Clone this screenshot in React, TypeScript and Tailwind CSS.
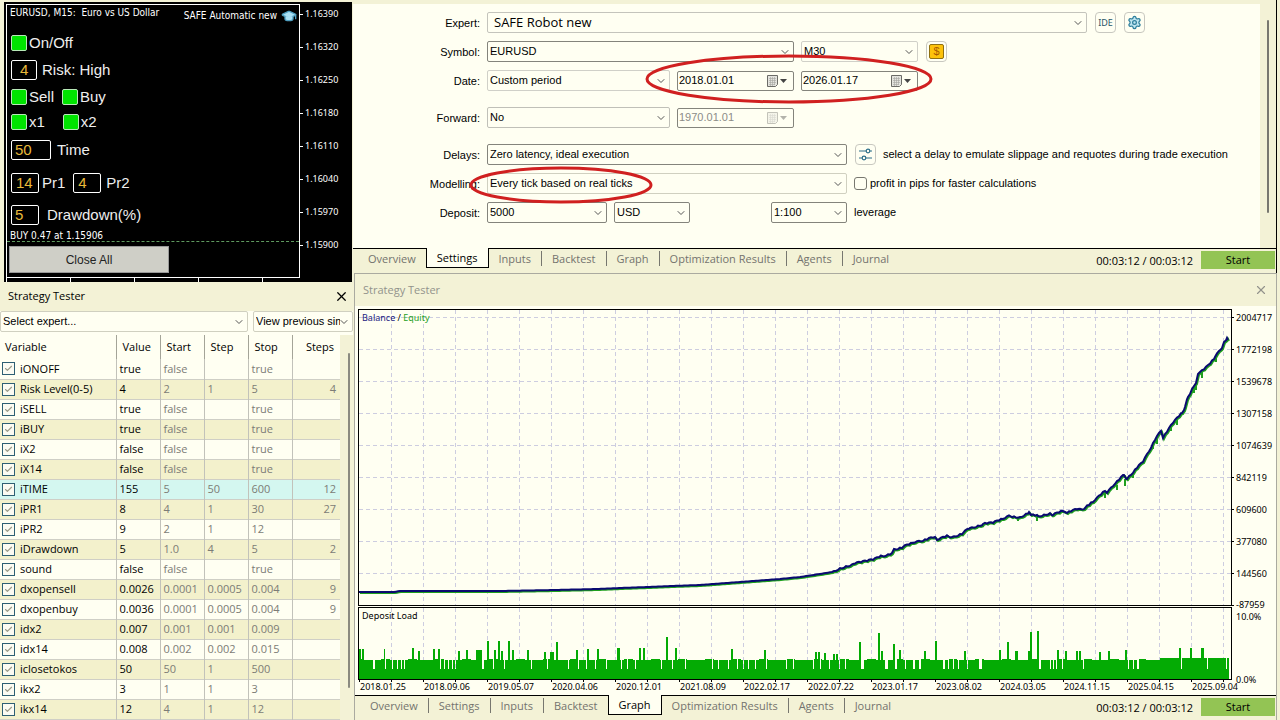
/**
 * Trading terminal layout: chart control panel and input variables on the
 * left, tester settings and the balance graph on the right.
 */
import type { ReactNode } from 'react'
import { Check, ChevronDown, GraduationCap, Settings, X } from 'lucide-react'

const PRICES = ['1.16390', '1.16320', '1.16250', '1.16180', '1.16110', '1.16040', '1.15970', '1.15900']

const TABS = ['Overview', 'Settings', 'Inputs', 'Backtest', 'Graph', 'Optimization Results', 'Agents', 'Journal']

// name, value, start, step, stop, steps
const VARIABLES = [
  ['iONOFF', 'true', 'false', '', 'true', ''],
  ['Risk Level(0-5)', '4', '2', '1', '5', '4'],
  ['iSELL', 'true', 'false', '', 'true', ''],
  ['iBUY', 'true', 'false', '', 'true', ''],
  ['iX2', 'false', 'false', '', 'true', ''],
  ['iX14', 'false', 'false', '', 'true', ''],
  ['iTIME', '155', '5', '50', '600', '12'],
  ['iPR1', '8', '4', '1', '30', '27'],
  ['iPR2', '9', '2', '1', '12', ''],
  ['iDrawdown', '5', '1.0', '4', '5', '2'],
  ['sound', 'false', 'false', '', 'true', ''],
  ['dxopensell', '0.0026', '0.0001', '0.0005', '0.004', '9'],
  ['dxopenbuy', '0.0036', '0.0001', '0.0005', '0.004', '9'],
  ['idx2', '0.007', '0.001', '0.001', '0.009', ''],
  ['idx14', '0.008', '0.002', '0.002', '0.015', ''],
  ['iclosetokos', '50', '50', '1', '500', ''],
  ['ikx2', '3', '1', '1', '3', ''],
  ['ikx14', '12', '4', '1', '12', ''],
]

const BALANCE_LABELS = [
  '2004717', '1772198', '1539678', '1307158', '1074639', '842119', '609600', '377080', '144560', '-87959',
]

const DATES = [
  '2018.01.25', '2018.09.06', '2019.05.07', '2020.04.06', '2020.12.01', '2021.08.09', '2022.02.17',
  '2022.07.22', '2023.01.17', '2023.08.02', '2024.03.05', '2024.11.15', '2025.04.15', '2025.09.04',
]

const BALANCE: [number, number][] = [
  [5, 286], [40, 286], [46, 285], [146, 285], [201, 284], [243, 283], [266, 282], [294, 281], [318, 280],
  [346, 279], [386, 276], [426, 273], [446, 271], [466, 268], [478, 266], [486, 262], [499, 258],
  [519, 254], [528, 250], [538, 247], [540, 243], [549, 241], [559, 237], [569, 235], [581, 231],
  [583, 234], [594, 230], [598, 231], [609, 227], [616, 222], [629, 218], [639, 217], [649, 213],
  [656, 210], [666, 211], [675, 206], [677, 209], [684, 210], [696, 207], [699, 209], [709, 205],
  [713, 207], [724, 203], [731, 202], [739, 196], [751, 185], [753, 187], [761, 178], [770, 169],
  [773, 173], [779, 167], [783, 162], [789, 156], [797, 142], [799, 137], [807, 125], [809, 132],
  [819, 117], [828, 107], [831, 101], [834, 91], [838, 83], [842, 77], [844, 68], [848, 64], [854, 59],
  [861, 51], [868, 42], [870, 36], [873, 32], [874, 34],
]

// x positions where equity dips below balance, with the depth of the dip
const DIPS: [number, number, number][] = [
  [664, 211, 4], [683, 210, 5], [751, 187, 5], [763, 179, 5], [771, 173, 7], [779, 168, 4], [799, 138, 5],
  [803, 133, 5], [817, 120, 5], [823, 114, 5], [840, 82, 5], [842, 78, 6], [848, 66, 6], [862, 51, 5],
]

const PEAKS: Record<number, number> = {
  5: 30, 8: 30, 30: 30, 58: 31, 64: 28, 79: 30, 84: 30, 104: 28, 112: 29, 122: 29, 123: 29, 124: 29,
  125: 29, 126: 29, 127: 29, 133: 38, 140: 29, 144: 38, 147: 28, 154: 38, 158: 29, 173: 29, 190: 27,
  196: 27, 198: 27, 202: 37, 222: 29, 233: 30, 243: 30, 263: 31, 264: 31, 285: 31, 289: 31, 312: 42,
  321: 31, 377: 30, 410: 29, 461: 27, 464: 27, 470: 26, 479: 25, 482: 25, 505: 37, 524: 46, 527: 28,
  539: 35, 545: 29, 570: 28, 581: 38, 610: 28, 645: 29, 653: 37, 661: 28, 662: 28, 674: 28, 676: 47,
  683: 48, 703: 29, 711: 28, 722: 28, 725: 28, 745: 27, 754: 28, 771: 29, 825: 31, 836: 31, 847: 31,
  848: 31,
}

const GAPS = new Set([
  19, 20, 31, 38, 43, 47, 50, 86, 90, 94, 98, 101, 128, 129, 139, 150, 177, 193, 214, 224, 232, 241, 252,
  267, 273, 281, 307, 318, 331, 358, 364, 374, 383, 389, 394, 401, 412, 432, 439, 459, 466, 475, 485,
  491, 507, 508, 509, 531, 532, 533, 541, 542, 551, 559, 560, 565, 566, 589, 590, 594, 599, 604, 613,
  625, 626, 627, 685, 686, 696, 699, 702, 708, 729, 774, 779, 783, 784, 827, 853, 872,
])

function loadPath() {
  let d = 'M5 373'
  for (let x = 5; x < 875; x++) {
    const usual = x > 805 ? 21 : 19 + (Math.floor(x / 9) % 3 === 0 ? 1 : 0)
    const height = GAPS.has(x) ? 10 : (PEAKS[x] ?? PEAKS[x - 1] ?? usual)
    d += `V${373 - height}H${x + 1}`
  }
  return d + 'V373Z'
}

// Fill in a point every 2px, with a small ripple once the curve starts to climb
function withRipple(list: [number, number][]) {
  const ripple = [0, -1, 1, 0, 1, -1]
  const out: [number, number][] = []
  for (let i = 0; i < list.length - 1; i++) {
    const [x0, y0] = list[i]
    const [x1, y1] = list[i + 1]
    out.push([x0, y0])
    for (let x = x0 + 2; x < x1; x += 2) {
      const y = y0 + ((y1 - y0) * (x - x0)) / (x1 - x0)
      out.push([x, y + (x > 480 ? ripple[x % 6] : 0)])
    }
  }
  out.push(list[list.length - 1])
  return out
}

function toPoints(list: [number, number][], dx: number, dy: number) {
  return list.map(([x, y]) => `${x + dx},${y + dy}`).join(' ')
}

interface SelectBoxProps {
  label: string
  value: string
  className: string
  id?: string
}

function SelectBox({ label, value, className, id }: SelectBoxProps) {
  return (
    <div className={`relative h-[21px] rounded-xs border ${className}`}>
      <select id={id} aria-label={label} className="block h-full w-full appearance-none pr-3 pl-[2px] outline-none">
        <option>{value}</option>
      </select>
      <ChevronDown
        size={12}
        strokeWidth={2}
        className="pointer-events-none absolute top-1 right-0.5 text-[#555]"
      />
    </div>
  )
}

interface DateBoxProps {
  label: string
  value: string
  disabled?: boolean
}

function DateBox({ label, value, disabled = false }: DateBoxProps) {
  return (
    <div
      className={`flex h-5 w-[117px] items-center rounded-xs border border-[#84847c] pr-1 ${disabled ? 'text-[#8c8c88]' : ''}`}
    >
      <input
        type="text"
        aria-label={label}
        defaultValue={value}
        disabled={disabled}
        className="w-full min-w-0 flex-1 pl-px outline-none"
      />
      <button type="button" aria-label={`${label} calendar`} disabled={disabled} className={disabled ? 'opacity-40' : ''}>
        <svg width="23" height="14" viewBox="0 0 23 14">
          <path d="M1.5 1.5h10v9l-2 2h-8z" fill="#e4e4de" stroke="#6b6b66" />
          <path d="M3 4.500h7M3 6.500h7M3 8.500h7M3 10.500h6M4.500 3v9M6.500 3v9M8.500 3v8" stroke="#a5a5a0" strokeWidth="0.600" />
          <path d="M14 5h7l-3.500 4z" fill="#444" />
        </svg>
      </button>
    </div>
  )
}

function FormRow({ label, htmlFor, children }: { label: string; htmlFor: string; children: ReactNode }) {
  return (
    <div className="flex h-[21px] items-center gap-[7px]">
      <label htmlFor={htmlFor} className="w-[119px] shrink-0 pt-0.5 text-right">
        {label}
      </label>
      {children}
    </div>
  )
}

function TabBar({ active }: { active: string }) {
  const at = TABS.indexOf(active)
  return (
    <div className="flex h-[25px] shrink-0 items-start bg-[#f3f2d6] text-[11px]">
      <div className="h-5 w-[5px] border-t border-black" />
      <nav className="flex">
        {TABS.map((tab, i) => (
          <div
            key={tab}
            className={
              tab === active
                ? 'h-5 border-x border-b border-black bg-[#fffff2]'
                : 'flex h-5 items-center border-t border-black'
            }
          >
            <button
              type="button"
              className={`h-[15px] px-[10px] leading-[15px] ${tab === active ? 'mt-0.5 text-black' : 'text-[#73736e]'} ${
                tab !== active && i !== at - 1 && i < TABS.length - 1 ? 'border-r border-[#77776f]' : ''
              }`}
            >
              {tab}
            </button>
          </div>
        ))}
      </nav>
      <div className="flex flex-1 items-start justify-end border-t border-black">
        <span className="mt-[3px] pr-2 leading-[18px]">00:03:12 / 00:03:12</span>
        <button type="button" className="mt-0.5 mr-px h-[18px] w-[74px] bg-[#93c454] leading-[18px]">
          Start
        </button>
      </div>
    </div>
  )
}

function Lamp({ label }: { label: string }) {
  return (
    <button type="button" className="flex items-center gap-[2px]">
      <span className="size-4 rounded-xs border border-[#b8e8b8] bg-[#00e400]" />
      {label}
    </button>
  )
}

function NumberBox({ label, value, className }: { label: string; value: string; className: string }) {
  return (
    <label className="flex items-center">
      <input
        type="text"
        defaultValue={value}
        className={`h-5 rounded-xs border border-white bg-black text-[#e8b93a] outline-none ${className}`}
      />
      <span>{label}</span>
    </label>
  )
}

function ChartPanel() {
  return (
    <section aria-label="Chart" className="mt-0.5 mr-px ml-1 flex bg-black pt-0.5 pl-[2px] text-[#eee]">
      <div className="min-w-0 flex-1">
        <div className="border border-white pb-1 font-['Liberation_Sans',sans-serif] text-[15px]">
          <div className="flex h-[25px] justify-between pr-0.5 pl-[3px] font-['DejaVu_Sans_Condensed','DejaVu_Sans',sans-serif] text-[10px] text-white">
            <span className="whitespace-pre leading-[15px]">EURUSD, M15:  Euro vs US Dollar</span>
            <span className="flex items-center gap-1 pb-1">
              SAFE Automatic new
              <GraduationCap size={16} fill="#a9e0f4" strokeWidth={2} className="text-[#4f9fc0]" />
            </span>
          </div>
          <div className="pl-1">
            <div className="flex h-[26px] items-center">
              <Lamp label="On/Off" />
            </div>
            <div className="flex h-7 items-center">
              <NumberBox label="Risk: High" value="4" className="mr-[5px] w-[26px] pl-2" />
            </div>
            <div className="flex h-[26px] items-center gap-2">
              <Lamp label="Sell" />
              <Lamp label="Buy" />
            </div>
            <div className="flex h-6 items-center gap-[18px]">
              <Lamp label="x1" />
              <Lamp label="x2" />
            </div>
            <div className="flex h-8 items-center">
              <NumberBox label="Time" value="50" className="mr-[6px] w-10 pl-[3px]" />
            </div>
            <div className="flex h-[34px] items-center gap-2">
              <NumberBox label="Pr1" value="14" className="mr-[3px] w-7 pl-1" />
              <NumberBox label="Pr2" value="4" className="mr-[5px] w-7 pl-1" />
            </div>
            <div className="flex h-[30px] items-center">
              <NumberBox label="Drawdown(%)" value="5" className="mr-2 w-7 pl-[3px]" />
            </div>
          </div>
          <div className="h-3 border-b border-dashed border-[#5f9a5f] pl-[3px] font-['DejaVu_Sans_Condensed','DejaVu_Sans',sans-serif] text-[10px] leading-3 text-white">
            BUY 0.47 at 1.15906
          </div>
          <button
            type="button"
            className="mt-1 ml-0.5 block h-[27px] w-40 border border-[#999] bg-[#cfcfc7] text-xs text-[#222]"
          >
            Close All
          </button>
        </div>
        <div className="flex h-1">
          {[0, 1, 2, 3, 4].map((n) => (
            <span key={n} className="w-16 shrink-0 border-l border-white last:w-0" />
          ))}
        </div>
      </div>
      <ul className="flex w-[52px] shrink-0 flex-col gap-[21px] pt-1 font-['Noto_Sans',sans-serif] text-[9px] leading-3 text-white">
        {PRICES.map((price) => (
          <li key={price} className="flex items-center gap-0.5">
            <span className="h-px w-[3px] bg-white" />
            {price}
          </li>
        ))}
      </ul>
    </section>
  )
}

function VariablesPanel() {
  return (
    <section aria-label="Strategy Tester inputs" className="flex flex-1 flex-col bg-[#f3f2d6]">
      <header className="flex h-[29px] items-center justify-between pr-1 pl-2 text-[11px]">
        <h2>Strategy Tester</h2>
        <button type="button" aria-label="Close">
          <X size={15} strokeWidth={2} />
        </button>
      </header>
      <div className="flex gap-[5px] bg-[#fffff2] font-['Liberation_Sans',sans-serif] text-[11px]">
        <SelectBox label="Expert" value="Select expert..." className="flex-1 border-[#d0d0c0]" />
        <SelectBox
          label="Results"
          value="View previous simulations"
          className="w-[100px] border-[#d0d0c0]"
        />
      </div>
      <div className="flex flex-1 bg-[#fffff2] pt-[3px]">
        <table className="w-full table-fixed border-collapse self-start text-[11px] leading-4">
          <colgroup>
            <col />
            <col className="w-11" />
            <col className="w-11" />
            <col className="w-11" />
            <col className="w-11" />
            <col className="w-12" />
          </colgroup>
          <thead>
            <tr className="h-6">
              <th className="pl-[5px] text-left font-normal">Variable</th>
              {['Value', 'Start', 'Step', 'Stop'].map((head) => (
                <th key={head} className="border-l border-[#a4a498] pl-1.5 text-left font-normal">
                  {head}
                </th>
              ))}
              <th className="border-l border-[#a4a498] pr-1.5 text-right font-normal">Steps</th>
            </tr>
          </thead>
          <tbody className="text-[#7c7c76]">
            {VARIABLES.map(([name, value, start, step, stop, steps], i) => (
              <tr
                key={name}
                className={`h-5 border-b border-[#cfcfc6] ${
                  name === 'iTIME' ? 'bg-[#d4f7f0]' : i % 2 ? 'bg-[#f3f1cc]' : ''
                }`}
              >
                <td className="p-0 text-black">
                  <label className="flex items-center gap-[5px] pl-0.5">
                    <span className="relative flex size-[13px]">
                      <input
                        type="checkbox"
                        defaultChecked
                        className="size-[13px] appearance-none border border-[#2d5f73] bg-[#fbfbf2]"
                      />
                      <Check
                        size={9}
                        strokeWidth={3}
                        className="pointer-events-none absolute top-0.5 left-0.5 text-[#9a9a88]"
                      />
                    </span>
                    {name}
                  </label>
                </td>
                <td className="border-l border-[#c2c2ba] p-0 pl-[3px] text-black">{value}</td>
                <td className="border-l border-[#c2c2ba] p-0 pl-[3px]">{start}</td>
                <td className="border-l border-[#c2c2ba] p-0 pl-[3px]">{step}</td>
                <td className="border-l border-[#c2c2ba] p-0 pl-[3px]">{stop}</td>
                <td className="border-l border-[#c2c2ba] p-0 pr-1 text-right">{steps}</td>
              </tr>
            ))}
          </tbody>
        </table>
        <div className="flex w-[13px] shrink-0 justify-end bg-[#f3f2d6] pt-[18px] pr-[3px] pb-8">
          <div className="w-0.5 rounded bg-[#8a8a80]" />
        </div>
      </div>
    </section>
  )
}

function SettingsPanel() {
  return (
    <section aria-label="Tester settings" className="flex flex-col border-r border-black bg-[#fffff2]">
      <div className="h-1 bg-[#f3f2d6]" />
      <div className="flex">
        <div className="relative flex flex-1 flex-col gap-2 pt-2 pb-[25px] pl-2 font-['Liberation_Sans',sans-serif] text-[11px]">
          <FormRow label="Expert:" htmlFor="expert">
            <SelectBox
              id="expert"
              label="Expert"
              value="SAFE Robot new"
              className="max-w-[600px] flex-1 border-[#c4c4bc] pl-1 font-['Open_Sans',sans-serif] text-[13px]"
            />
            <div className="ml-px flex gap-2 pr-[114px]">
              <button
                type="button"
                className="size-[21px] rounded border border-[#c8c8c0] font-['Noto_Sans',sans-serif] text-[9px] text-[#1f5468]"
              >
                IDE
              </button>
              <button
                type="button"
                aria-label="Expert properties"
                className="flex size-[21px] items-center justify-center rounded border border-[#c8c8c0] text-[#2f7f9c]"
              >
                <Settings size={15} fill="#bfe6f0" strokeWidth={2} />
              </button>
            </div>
          </FormRow>
          <FormRow label="Symbol:" htmlFor="symbol">
            <SelectBox id="symbol" label="Symbol" value="EURUSD" className="w-[307px] border-[#84847c]" />
            <SelectBox label="Timeframe" value="M30" className="w-[117px] border-[#d0d0c8]" />
            <button
              type="button"
              aria-label="Symbol specification"
              className="ml-px flex size-[21px] items-center justify-center rounded border border-[#c8c8c0]"
            >
              <span className="flex size-[15px] items-center justify-center rounded-xs border border-[#8f7010] bg-[#fdc20a] text-[11px] leading-none text-[#a85a00]">
                $
              </span>
            </button>
          </FormRow>
          <FormRow label="Date:" htmlFor="period">
            <SelectBox id="period" label="Period" value="Custom period" className="w-[183px] border-[#d0d0c8]" />
            <DateBox label="From" value="2018.01.01" />
            <DateBox label="To" value="2026.01.17" />
          </FormRow>
          <div className="py-2">
            <FormRow label="Forward:" htmlFor="forward">
              <SelectBox id="forward" label="Forward" value="No" className="w-[183px] border-[#c0c0b8]" />
              <DateBox label="Forward date" value="1970.01.01" disabled />
            </FormRow>
          </div>
          <FormRow label="Delays:" htmlFor="delays">
            <SelectBox
              id="delays"
              label="Delays"
              value="Zero latency, ideal execution"
              className="w-[360px] border-[#84847c]"
            />
            <button
              type="button"
              aria-label="Delay settings"
              className="ml-px flex size-[21px] items-center justify-center rounded border border-[#c8c8c0]"
            >
              <svg width="15" height="15" viewBox="0 0 15 15" fill="none" stroke="#2c6f88" strokeWidth="1.200">
                <path d="M1 4h7M12 4h2M1 11h3M8 11h6" />
                <circle cx="10" cy="4" r="1.800" />
                <circle cx="6" cy="11" r="1.800" />
              </svg>
            </button>
            <span>select a delay to emulate slippage and requotes during trade execution</span>
          </FormRow>
          <FormRow label="Modelling:" htmlFor="modelling">
            <SelectBox
              id="modelling"
              label="Modelling"
              value="Every tick based on real ticks"
              className="w-[360px] border-[#d0d0c0]"
            />
            <label className="flex items-center gap-[3px]">
              <input type="checkbox" className="size-[13px] appearance-none rounded-[3px] border border-[#77776f]" />
              profit in pips for faster calculations
            </label>
          </FormRow>
          <FormRow label="Deposit:" htmlFor="deposit">
            <div className="flex w-[360px] gap-[7px]">
              <SelectBox id="deposit" label="Deposit" value="5000" className="w-[120px] border-[#84847c]" />
              <SelectBox label="Currency" value="USD" className="w-[76px] border-[#84847c]" />
              <SelectBox label="Leverage" value="1:100" className="ml-auto w-[76px] border-[#84847c]" />
            </div>
            <span>leverage</span>
          </FormRow>

          {/* Hand-drawn style markers over the dates and the modelling mode */}
          <svg
            className="pointer-events-none absolute top-[49px] left-[292px]"
            width="290"
            height="52"
            viewBox="0 0 290 52"
            fill="none"
          >
            <ellipse cx="144" cy="26" rx="142" ry="23" stroke="#d02020" strokeWidth="3" />
          </svg>
          <svg
            className="pointer-events-none absolute top-[161px] left-[115px]"
            width="186"
            height="40"
            viewBox="0 0 186 40"
            fill="none"
          >
            <ellipse cx="93" cy="20" rx="90" ry="17" stroke="#d02020" strokeWidth="3" />
          </svg>
        </div>
        <div className="flex w-4 justify-center bg-[#f3f2d6] pt-4 pb-[35px]">
          <div className="w-0.5 rounded bg-[#77776f]" />
        </div>
      </div>
      <TabBar active="Settings" />
    </section>
  )
}

function BalanceGraph() {
  const curve = withRipple(BALANCE)
  return (
    <svg
      role="img"
      aria-label="Balance and equity graph"
      viewBox="1 0 921 388"
      className="block w-full font-['Noto_Sans',sans-serif] text-[9px]"
    >
      <g stroke="#cdcde0" strokeDasharray="4 3">
        {BALANCE_LABELS.slice(0, 9).map((label, i) => (
          <path key={label} d={`M5 ${11.5 + i * 32}H878`} />
        ))}
        {Array.from({ length: 27 }, (_, i) => (
          <path key={i} d={`M${37.5 + i * 32} 4V299M${37.5 + i * 32} 302V373`} />
        ))}
      </g>
      <polyline points={toPoints(curve, 1, 1)} fill="none" stroke="#1fa01f" strokeWidth="2" />
      {DIPS.map(([x, y, depth]) => (
        <path key={x} d={`M${x} ${y}v${depth}`} stroke="#1fa01f" strokeWidth="2" />
      ))}
      <polyline points={toPoints(curve, 0, 0)} fill="none" stroke="#0a0a70" strokeWidth="2" />
      <path d={loadPath()} fill="#04ab04" shapeRendering="crispEdges" />
      <path
        d="M4.500 3.500H877.500V299.500H4.500ZM4.500 301.500H877.500V373.500H4.500Z"
        fill="none"
        stroke="#000"
        shapeRendering="crispEdges"
      />
      {BALANCE_LABELS.map((label, i) => (
        <g key={label}>
          <path d={`M878 ${11.5 + i * 32}h2`} stroke="#000" />
          <text x="882" y={(i === 9 ? 14 : 15) + i * 32}>
            {label}
          </text>
        </g>
      ))}
      <text x="882" y="314">10.0%</text>
      <text x="882" y="377">0.0%</text>
      {DATES.map((date, i) => (
        <g key={date}>
          <path d={`M${5.5 + i * 64} 374v2M${37.5 + i * 64} 374v2`} stroke="#000" />
          <text x={6 + i * 64} y="384">
            {date}
          </text>
        </g>
      ))}
      <text x="8" y="15">
        <tspan fill="#1a1a80">Balance</tspan>
        <tspan> / </tspan>
        <tspan fill="#1fa01f">Equity</tspan>
      </text>
      <text x="8" y="313">Deposit Load</text>
    </svg>
  )
}

function GraphPanel() {
  return (
    <section
      aria-label="Strategy Tester graph"
      className="mr-[3px] ml-px flex flex-1 flex-col border-x border-t border-[#aaaaa0] bg-[#fffff2]"
    >
      <header className="flex h-8 items-center justify-between bg-[#f3f2d6] pr-2 pl-2 text-[11px] text-[#92928c]">
        <h2>Strategy Tester</h2>
        <button type="button" aria-label="Close">
          <X size={14} strokeWidth={2} />
        </button>
      </header>
      <div className="flex-1">
        <BalanceGraph />
      </div>
      <TabBar active="Graph" />
    </section>
  )
}

export default function App() {
  return (
    <main className="flex min-h-screen bg-[#f3f2d6] font-['Open_Sans',sans-serif] text-black">
      <div className="flex w-[353px] shrink-0 flex-col">
        <ChartPanel />
        <VariablesPanel />
      </div>
      <div className="flex min-w-0 flex-1 flex-col">
        <div className="mr-[3px]">
          <SettingsPanel />
        </div>
        <GraphPanel />
      </div>
    </main>
  )
}
